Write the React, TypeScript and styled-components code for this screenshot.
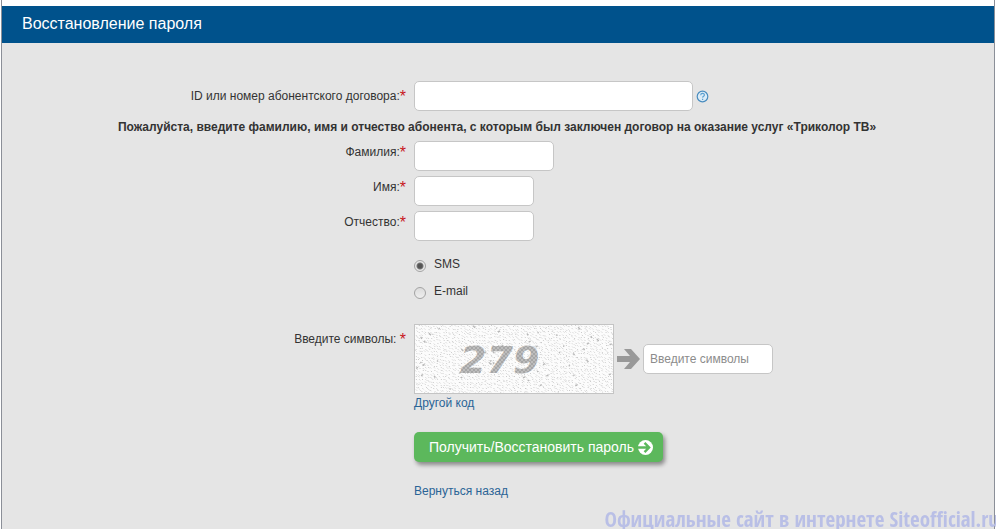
import React from 'react';
import styled, { createGlobalStyle } from 'styled-components';

const GlobalStyle = createGlobalStyle`
  *, *::before, *::after { box-sizing: border-box; }
  body {
    margin: 0;
    background: #fff;
    color: #333;
    font-family: "Liberation Sans", Arial, sans-serif;
    font-size: 12px;
    line-height: 16px;
  }
`;

const Page = styled.div`
  display: flex;
  flex-direction: column;
  min-height: 100vh;
  margin: 0 1px;
  padding-top: 6px;
  border: 0 solid #8b8f98;
  border-width: 0 1px;
`;

const Header = styled.header`
  padding: 8px 20px 9px;
  background: #00528c;
  color: #fff;
`;

const Title = styled.h1`
  margin: 0;
  font-size: 16px;
  font-weight: 400;
  line-height: 20px;
`;

const Form = styled.form`
  display: flex;
  flex: 1;
  flex-direction: column;
  padding-top: 38px;
  background: #e5e5e5;
`;

const Row = styled.div<{ $gap?: number }>`
  display: grid;
  grid-template-columns: minmax(0, 404px) minmax(0, 1fr);
  column-gap: 8px;
  margin-bottom: ${(p) => p.$gap ?? 5}px;
`;

const Label = styled.label<{ $top?: number }>`
  padding-top: ${(p) => p.$top ?? 3}px;
  text-align: right;
`;

const Star = styled.span`
  color: #c8171e;
  font-size: 16px;
  line-height: 12px;
  vertical-align: -2px;
`;

const Field = styled.div`
  display: flex;
  align-items: center;
  grid-column: 2;
`;

const TextBox = styled.input<{ $width: number }>`
  width: ${(p) => p.$width}px;
  max-width: 100%;
  height: 30px;
  padding: 0 6px;
  border: 1px solid #c6c6c6;
  border-radius: 5px;
  background: #fff;
  color: #333;
  font: inherit;
  &::placeholder { color: #8c8c8c; opacity: 1; }
`;

const HelpButton = styled.button`
  display: flex;
  margin-left: 3px;
  padding: 0;
  border: 0;
  background: none;
`;

const Note = styled.p`
  margin: 0 0 6px;
  padding-right: 2px;
  font-weight: 700;
  text-align: center;
`;

const Choices = styled.div`
  display: grid;
  grid-column: 2;
  row-gap: 11px;
`;

const Choice = styled.label`
  display: flex;
  gap: 8px;
`;

const Radio = styled.input`
  appearance: none;
  width: 12px;
  height: 12px;
  margin: 4px 0 0;
  border: 1px solid #a3a3a3;
  border-radius: 50%;
  background: linear-gradient(#dcdcdc, #eeeeee);
  &:checked {
    background: radial-gradient(circle, #555 0 2px, #777 3px, #e8e8e8 4px);
  }
`;

const CaptchaColumn = styled.div`
  display: flex;
  flex-direction: column;
  align-items: flex-start;
`;

const CaptchaLine = styled.div`
  display: flex;
  align-items: center;
`;

const CaptchaFrame = styled.div`
  display: flex;
  width: 200px;
  height: 70px;
  border: 1px solid #c4c4c4;
  background: #fcfcfc;
`;

const ArrowIcon = styled.svg`
  margin: 0 3px;
`;

const Link = styled.a`
  color: #2a6496;
  text-decoration: none;
`;

const CaptchaLink = styled(Link)`
  margin-top: 1px;
`;

const Submit = styled.button`
  display: flex;
  align-items: center;
  gap: 4px;
  height: 30px;
  padding: 0 10px 0 15px;
  border: 0;
  border-radius: 5px;
  background: #5cb85c;
  box-shadow: 2px 3px 4px rgba(0, 0, 0, 0.4);
  color: #fff;
  font: inherit;
  font-size: 14px;
  white-space: nowrap;
`;

const Watermark = styled.div`
  position: fixed;
  right: -3px;
  bottom: -2px;
  color: #b9bfe6;
  font-family: "Liberation Sans Narrow", "Open Sans Condensed", "DejaVu Sans Condensed", sans-serif;
  font-size: 21px;
  font-weight: 700;
  line-height: 24px;
  white-space: nowrap;
`;

const noise = (n: number) => {
  let h = Math.imul(n + 1, 0x9e3779b1);
  h = Math.imul(h ^ (h >>> 15), 0x85ebca6b);
  h = Math.imul(h ^ (h >>> 13), 0xc2b2ae35);
  return ((h ^ (h >>> 16)) >>> 0) / 4294967296;
};

const grain = Array.from({ length: 1650 }, (_, i) => {
  const x = (i % 66) * 3 + noise(i) * 2;
  const y = Math.floor(i / 66) * 2.8 + noise(i + 3000) * 2;
  return `M${x.toFixed(1)} ${y.toFixed(1)}l1 1`;
}).join('');

const specks = Array.from({ length: 50 }, (_, i) => {
  const x = noise(i + 7000) * 196;
  const y = noise(i + 8000) * 66;
  return `M${x.toFixed(1)} ${y.toFixed(1)}l${i % 2 ? 2 : 1} ${i % 3 ? -1 : 2}`;
}).join('');

const Captcha = () => (
  <CaptchaFrame>
    <svg width="198" height="68" viewBox="0 0 198 68" role="img" aria-label="279">
      <defs>
        <pattern id="mesh" width="4" height="4" patternUnits="userSpaceOnUse">
          <rect width="4" height="4" fill="#a6a6a6" />
          <path d="M0 1h2M2 3h2" stroke="#d4d4d4" />
        </pattern>
      </defs>
      <path d={grain} stroke="#c4c4c4" strokeWidth="0.9" />
      <path d={specks} stroke="#b8b8b8" strokeWidth="1.4" />
      <text
        x="45"
        y="48"
        fill="url(#mesh)"
        fontFamily="DejaVu Sans, Verdana, sans-serif"
        fontSize="38"
        fontStyle="italic"
        fontWeight="700"
      >
        279
      </text>
    </svg>
  </CaptchaFrame>
);

export default function App() {
  return (
    <>
      <GlobalStyle />
      <Page>
        <Header>
          <Title>Восстановление пароля</Title>
        </Header>
        <Form onSubmit={(e) => e.preventDefault()}>
          <Row $gap={8}>
            <Label htmlFor="contract" $top={7}>
              ID или номер абонентского договора:<Star>*</Star>
            </Label>
            <Field>
              <TextBox id="contract" $width={279} />
              <HelpButton type="button" aria-label="Справка">
                <svg width="13" height="13" viewBox="0 0 13 13" fill="none">
                  <circle cx="6.5" cy="6.5" r="5.3" fill="#dcecf7" stroke="#4a8dbf" strokeWidth="1.2" />
                  <path d="M4.7 5.2c0-2.4 3.7-2.3 3.7-.2 0 1.4-1.7 1.2-1.8 2.6" stroke="#5a9fd0" strokeWidth="1.1" />
                  <path d="M6 8.8h1.2v1.1H6z" fill="#5a9fd0" />
                </svg>
              </HelpButton>
            </Field>
          </Row>
          <Note>
            Пожалуйста, введите фамилию, имя и отчество абонента, с которым был заключен договор на
            оказание услуг «Триколор ТВ»
          </Note>
          <Row>
            <Label htmlFor="surname">Фамилия:<Star>*</Star></Label>
            <Field><TextBox id="surname" $width={140} /></Field>
          </Row>
          <Row>
            <Label htmlFor="name">Имя:<Star>*</Star></Label>
            <Field><TextBox id="name" $width={120} /></Field>
          </Row>
          <Row $gap={15}>
            <Label htmlFor="patronymic">Отчество:<Star>*</Star></Label>
            <Field><TextBox id="patronymic" $width={120} /></Field>
          </Row>
          <Row $gap={25}>
            <Choices>
              <Choice><Radio type="radio" name="channel" defaultChecked />SMS</Choice>
              <Choice><Radio type="radio" name="channel" />E-mail</Choice>
            </Choices>
          </Row>
          <Row $gap={21}>
            <Label htmlFor="code" $top={7}>Введите символы: <Star>*</Star></Label>
            <CaptchaColumn>
              <CaptchaLine>
                <Captcha />
                <ArrowIcon width="23" height="20" viewBox="0 0 23 20">
                  <path d="M0 7h13L7 0h7l9 10-9 10H7l6-7H0z" fill="#999" />
                </ArrowIcon>
                <TextBox id="code" $width={130} placeholder="Введите символы" />
              </CaptchaLine>
              <CaptchaLink href="#code">Другой код</CaptchaLink>
            </CaptchaColumn>
          </Row>
          <Row $gap={21}>
            <Field>
              <Submit type="submit">
                Получить/Восстановить пароль
                <svg width="15" height="15" viewBox="0 0 15 15">
                  <circle cx="7.5" cy="7.5" r="7.5" fill="#fff" />
                  <path d="M0 6.3h8.2L5.7 3.8l1.7-1.7 5.4 5.4-5.4 5.4-1.7-1.7 2.5-2.5H0z" fill="#5cb85c" />
                </svg>
              </Submit>
            </Field>
          </Row>
          <Row>
            <Field><Link href="#back">Вернуться назад</Link></Field>
          </Row>
        </Form>
        <Watermark>Официальные сайт в интернете Siteofficial.ru</Watermark>
      </Page>
    </>
  );
}
